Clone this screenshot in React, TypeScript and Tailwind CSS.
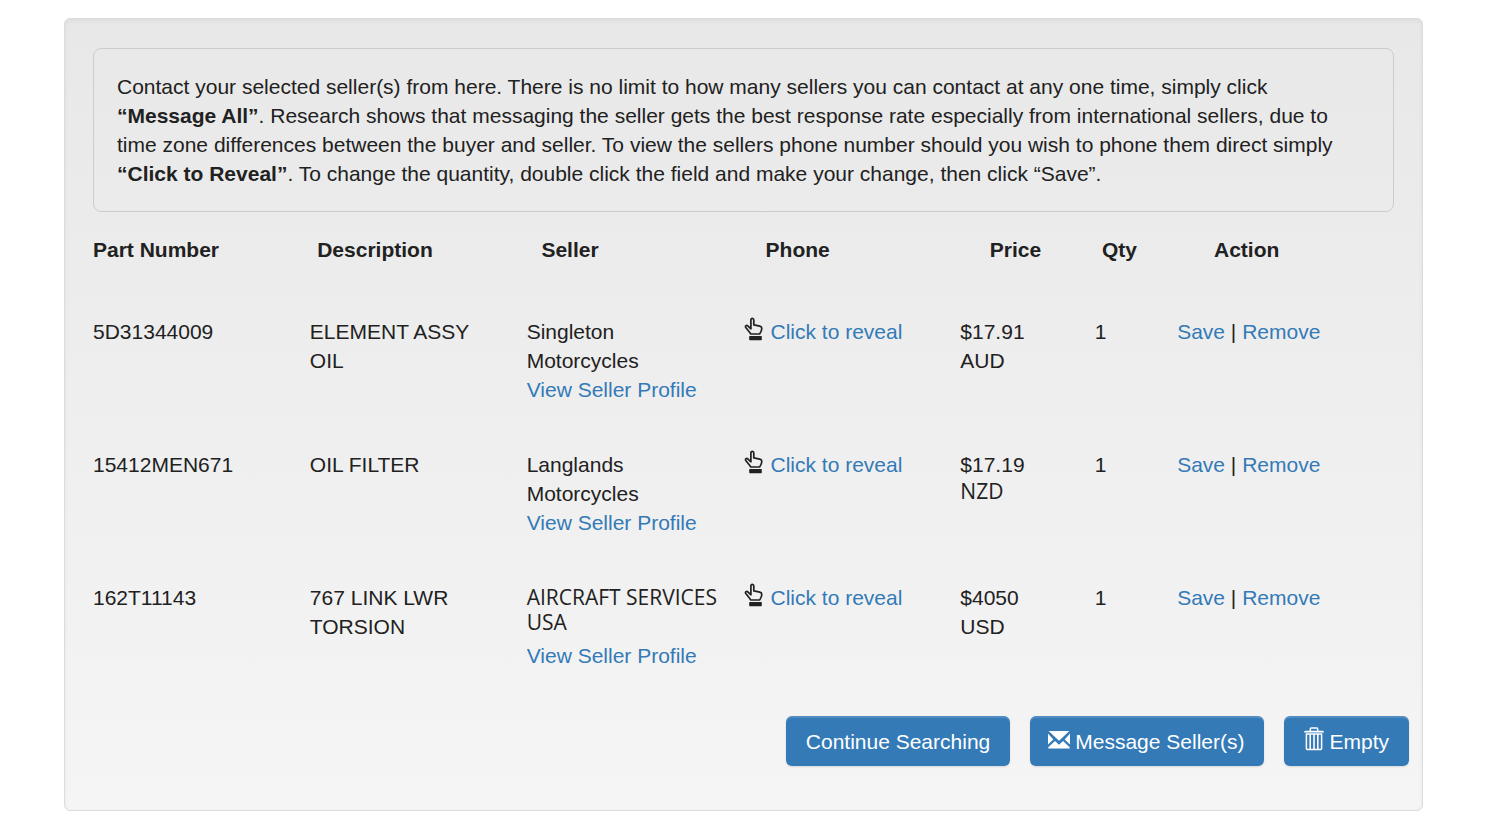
import React, { useState } from 'react';

interface Part {
  partNumber: string;
  description: string;
  seller: React.ReactNode;
  price: React.ReactNode;
  qty: number;
}

const HandIcon: React.FC = () => (
  <svg className="inline-block h-6 w-5 ml-px mr-[6px] align-[-2px]" viewBox="0 0 20 24" fill="none" aria-hidden="true">
    <path
      d="M6.900 12.500V3C6.900 1.800 7.500 1.300 8.300 1.300S9.800 1.800 9.800 3v4.900l6 1.300c1.300.3 2 1 2 2.200 0 2.200-1.100 3.800-2.200 5.600H6.800C5.600 15 3.500 12.900 1.800 10.500c-1-1.600.8-2.700 2-1.600l3.100 3"
      stroke="currentColor"
      strokeWidth="1.7"
      strokeLinejoin="round"
    />
    <rect x="5.200" y="19" width="12.600" height="4.200" rx=".6" fill="currentColor" />
  </svg>
);

const EnvelopeIcon: React.FC = () => (
  <svg className="-ml-0.5 inline-block h-[18px] w-[22px] mr-[5px] align-baseline" viewBox="0 0 22 18" fill="currentColor" aria-hidden="true">
    <path d="M.6 0h20.800L11 9.800z" />
    <path d="M0 2.600 5.300 8.400 0 13.400z" />
    <path d="M22 2.600v10.800l-5.300-5z" />
    <path d="M.3 17.400v-1.200L7 10l4 3.800L15 10l6.700 6.200v1.200z" />
  </svg>
);

const TrashIcon: React.FC = () => (
  <svg className="inline-block h-6 w-5 mr-[5px] align-[-2px]" viewBox="0 0 20 24" aria-hidden="true">
    <path d="M6.300 4V1.900c0-.6.4-.9.900-.9h5.600c.5 0 .9.3.9.9V4" fill="none" stroke="currentColor" strokeWidth="1.500" />
    <path d="M0 5.500c0-1 .5-1.700 1.500-1.700h17c1 0 1.500.7 1.500 1.700z" fill="currentColor" />
    <path d="M2.400 7v14.500c0 .6.3.9.9.9h13.400c.6 0 .9-.3.9-.9V7z" fill="none" stroke="currentColor" strokeWidth="1.500" />
    <path d="M6.200 7v15M10 7v15M13.800 7v15" stroke="currentColor" strokeWidth="1.600" />
  </svg>
);

const initialParts: Part[] = [
  {
    partNumber: '5D31344009',
    description: 'ELEMENT ASSY OIL',
    seller: 'Singleton Motorcycles',
    price: <>$17.91<br />AUD</>,
    qty: 1,
  },
  {
    partNumber: '15412MEN671',
    description: 'OIL FILTER',
    seller: 'Langlands Motorcycles',
    price: (
      <>
        $17.19
        <span className="block font-['Open_Sans',sans-serif] leading-[25px]">NZD</span>
      </>
    ),
    qty: 1,
  },
  {
    partNumber: '162T11143',
    description: '767 LINK LWR TORSION',
    seller: (
      <span className="block pt-0.5 pb-1.5 font-['Open_Sans',sans-serif] leading-[25px]">
        AIRCRAFT SERVICES<br />USA
      </span>
    ),
    price: <>$4050<br />USD</>,
    qty: 1,
  },
];

const linkClass = 'text-[#337ab7] hover:underline';
const buttonClass =
  'h-[50px] rounded-md bg-[#337ab7] px-5 text-white shadow-[inset_0_2px_0_rgba(255,255,255,0.15),0_1px_2px_rgba(0,0,0,0.12)] hover:bg-[#286090]';

const App: React.FC = () => {
  const [quantities, setQuantities] = useState(initialParts.map((part) => String(part.qty)));

  const changeQty = (index: number, value: string) => {
    setQuantities(quantities.map((qty, i) => (i === index ? value : qty)));
  };

  return (
    <main className="pt-[18px] pr-[66px] pb-2 pl-16 font-['Liberation_Sans',Arial,sans-serif] text-[21px] leading-[29px] text-[#212121]">
      <div className="rounded-md border border-[#dcdcdc] bg-linear-to-b from-[#e8e8e8] to-[#f5f5f5] pt-[29px] pb-11 shadow-[inset_0_2px_4px_rgba(0,0,0,0.05)]">
        <div className="px-7">
          <p className="rounded-lg border border-[#cccccc] p-[23px]">
            Contact your selected seller(s) from here. There is no limit to how many sellers you can contact at any
            one time, simply click <strong>“Message All”</strong>. Research shows that messaging the seller gets the
            best response rate especially from international sellers, due to time zone differences between the buyer
            and seller. To view the sellers phone number should you wish to phone them direct
            simply <strong>“Click to Reveal”</strong>. To change the quantity, double click the field and make your
            change, then click “Save”.
          </p>

          <table className="mt-[23px] block">
            <thead className="block">
              <tr className="grid grid-cols-[2fr_2fr_2fr_2fr_1fr_1fr_180px] pb-[53px] text-left">
                <th>Part Number</th>
                <th>Description</th>
                <th>Seller</th>
                <th>Phone</th>
                <th>Price</th>
                <th>Qty</th>
                <th>Action</th>
              </tr>
            </thead>
            <tbody className="block">
              {initialParts.map((part, index) => (
                <tr key={part.partNumber} className="grid grid-cols-[2fr_2fr_2fr_2fr_1fr_1fr_2fr] pb-[46px]">
                  <td>{part.partNumber}</td>
                  <td className="pr-10">{part.description}</td>
                  <td>
                    <div className="max-w-48">{part.seller}</div>
                    <a href="#profile" className={linkClass}>View Seller Profile</a>
                  </td>
                  <td className="h-[29px] whitespace-nowrap">
                    <HandIcon />
                    <a href="#phone" className={linkClass}>Click to reveal</a>
                  </td>
                  <td>{part.price}</td>
                  <td>
                    <input
                      type="text"
                      aria-label={`Quantity for ${part.partNumber}`}
                      value={quantities[index]}
                      onChange={(e) => changeQty(index, e.target.value)}
                      className="block h-[29px] w-full bg-transparent pl-[26px]"
                    />
                  </td>
                  <td>
                    <a href="#save" className={linkClass}>Save</a> | <a href="#remove" className={linkClass}>Remove</a>
                  </td>
                </tr>
              ))}
            </tbody>
          </table>
        </div>

        <div className="flex justify-end gap-5 pr-[13px]">
          <button type="button" className={buttonClass}>Continue Searching</button>
          <button type="button" className={buttonClass}>
            <EnvelopeIcon />
            Message Seller(s)
          </button>
          <button type="button" className={buttonClass}>
            <TrashIcon />
            Empty
          </button>
        </div>
      </div>
    </main>
  );
};

export default App;
